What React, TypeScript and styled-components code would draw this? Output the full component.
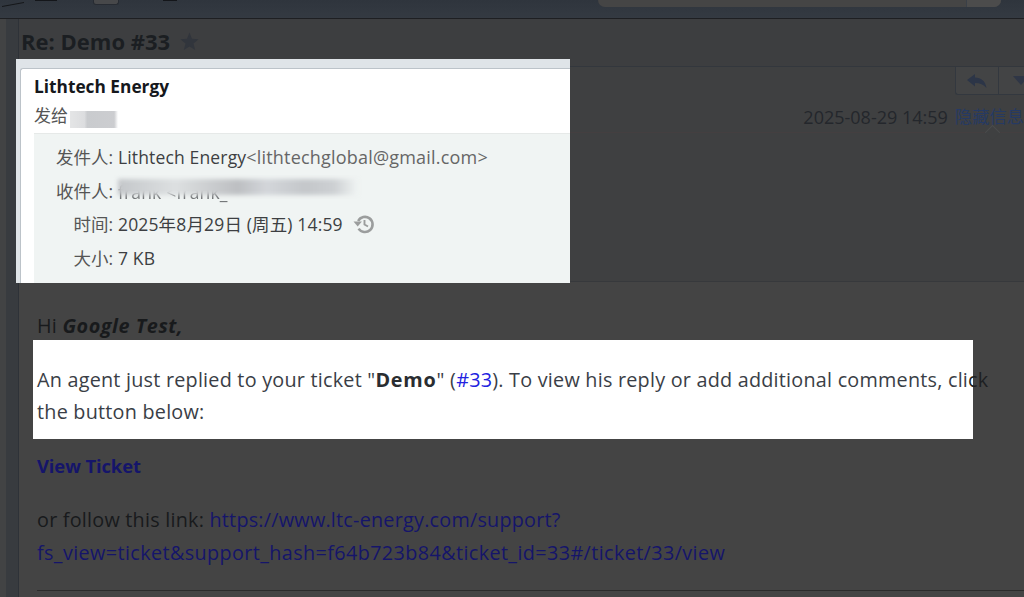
import styled, { createGlobalStyle } from 'styled-components';

const GlobalStyle = createGlobalStyle`
  html, body {
    margin: 0;
    padding: 0;
    background: #444;
  }
  body {
    font-family: 'Open Sans', 'Noto Sans CJK SC', sans-serif;
    overflow: hidden;
  }
`;

const ReplyIcon = () => (
  <svg width="20" height="14" viewBox="0 0 20 14">
    <path d="M0 6 L8 0 V3.5 C14 3.5 18.500 7 19.500 14 C16.500 10.500 13 9 8 9 V12.500 Z" fill="#2c3547" />
  </svg>
);

const HistoryIcon = () => (
  <svg width="22" height="22" viewBox="0 0 22 22" fill="none">
    <path d="M5.2 8 A7.6 7.6 0 1 1 5.6 15.6" stroke="#9b9d9d" strokeWidth="2.6" />
    <path d="M0.500 8.500 H8.900 L4.700 13.500 Z" fill="#9b9d9d" />
    <path d="M11.500 7 V11.500 L15 13.500" stroke="#9b9d9d" strokeWidth="1.9" />
  </svg>
);

const StarIcon = () => (
  <svg width="19" height="19" viewBox="0 0 20 19">
    <path d="M10 0 L12.6 6.500 L19.600 7 L14.200 11.500 L16 18.500 L10 14.700 L4 18.500 L5.800 11.500 L0.400 7 L7.400 6.500 Z" fill="#31353c" />
  </svg>
);

export default function App() {
  return (
    <Page>
      <GlobalStyle />
      <TopBar>
        <Scribble />
        <ToolLabel />
        <ToolButton />
        <ToolText />
        <SearchBox>
          <SearchEnd />
        </SearchBox>
      </TopBar>
      <Workspace>
        <LeftRail />
        <Main>
          <SubjectBar>
            <Subject>Re: Demo #33</Subject>
            <StarIcon />
          </SubjectBar>
          <MailHeader>
            <HeaderTop>
              <SplitButton>
                <SplitLeft>
                  <ReplyIcon />
                </SplitLeft>
                <SplitRight>
                  <Caret />
                </SplitRight>
              </SplitButton>
              <MetaRow>
                <MetaDate>2025-08-29 14:59</MetaDate>
                <MetaLink>隐藏信息</MetaLink>
              </MetaRow>
              <Notch />
            </HeaderTop>
          </MailHeader>
          <MailBody>
            <Line>
              Hi{' '}
              <Greeting>
                <em>Google Test,</em>
              </Greeting>
            </Line>
            <LitBlock>
              <WhitePatch />
              <LitText>
                An agent just replied to your ticket "<strong>Demo</strong>" (<TicketLink>#33</TicketLink>). To
                view his reply or add additional comments, cli<Spill>ck</Spill>
                <br />
                the button below:
              </LitText>
            </LitBlock>
            <Line>
              <ViewTicket>View Ticket</ViewTicket>
            </Line>
            <Line>
              or follow this link: <DimLink>https://www.ltc-energy.com/support?</DimLink>
              <br />
              <LongLink>fs_view=ticket&amp;support_hash=f64b723b84&amp;ticket_id=33#/ticket/33/view</LongLink>
            </Line>
            <Rule />
          </MailBody>
        </Main>
      </Workspace>

      <Spotlight>
        <SenderCard>
          <SenderName>Lithtech Energy</SenderName>
          <SendTo>
            发给<BlurName>frank</BlurName>
          </SendTo>
          <Details>
            <DetailRow>
              <DetailLabel>发件人:</DetailLabel>
              <DetailValue>
                Lithtech Energy<Email>&lt;lithtechglobal@gmail.com&gt;</Email>
              </DetailValue>
            </DetailRow>
            <DetailRow>
              <DetailLabel>收件人:</DetailLabel>
              <DetailValue>
                <BlurAddress>frank &lt;frank_</BlurAddress>
              </DetailValue>
            </DetailRow>
            <DetailRow>
              <DetailLabel>时间:</DetailLabel>
              <DetailValue>
                2025年8月29日 (周五) 14:59
                <HistoryWrap>
                  <HistoryIcon />
                </HistoryWrap>
              </DetailValue>
            </DetailRow>
            <DetailRow>
              <DetailLabel>大小:</DetailLabel>
              <DetailValue>7 KB</DetailValue>
            </DetailRow>
          </Details>
        </SenderCard>
      </Spotlight>
    </Page>
  );
}

const Page = styled.div`
  position: relative;
  width: 1024px;
  height: 597px;
  overflow: hidden;
  display: flex;
  flex-direction: column;
  background: #444;
  color: #1f2124;
`;

const TopBar = styled.div`
  height: 18px;
  flex: none;
  display: flex;
  align-items: flex-start;
  background: linear-gradient(#2f353d, #343a42);
  border-bottom: 1px solid #1e1f22;
`;

const Scribble = styled.div`
  width: 22px;
  height: 4px;
  margin-left: 2px;
  border-bottom: 1px solid #15171a;
  transform: skewY(-10deg);
`;

const ToolLabel = styled.div`
  width: 22px;
  height: 1px;
  margin-left: 11px;
  background: #14161a;
`;

const ToolButton = styled.div`
  width: 24px;
  height: 4px;
  margin-left: 36px;
  background: #47484a;
  border: 1px solid #272b32;
  border-top: none;
  border-radius: 0 0 3px 3px;
`;

const ToolText = styled.div`
  width: 14px;
  height: 1px;
  margin-left: 44px;
  background: #14161a;
`;

const SearchBox = styled.div`
  width: 403px;
  height: 7px;
  margin-left: 421px;
  display: flex;
  justify-content: flex-end;
  background: #454545;
  border-radius: 0 0 14px 14px;
  overflow: hidden;
`;

const SearchEnd = styled.div`
  width: 34px;
  background: #4c4c4c;
  border-left: 1px solid #3a4048;
`;

const Workspace = styled.div`
  flex: 1;
  min-height: 0;
  display: flex;
`;

const LeftRail = styled.div`
  width: 19px;
  flex: none;
  box-sizing: border-box;
  border-left: 6px solid #424344;
  background: #383b3f;
  border-right: 1px solid #2e3238;
`;

const Main = styled.div`
  flex: 1;
  min-width: 0;
  display: flex;
  flex-direction: column;
`;

const SubjectBar = styled.div`
  height: 48px;
  flex: none;
  box-sizing: border-box;
  padding: 0 0 3px 2px;
  display: flex;
  align-items: center;
  gap: 10px;
  background: #3d3e40;
  border-bottom: 1px solid #33373d;
`;

const Subject = styled.h1`
  margin: 0;
  font-size: 22px;
  font-weight: 700;
  color: #1b1e22;
`;

const MailHeader = styled.div`
  height: 215px;
  flex: none;
  box-sizing: border-box;
  background: #3f4041;
  border-bottom: 1px solid #37393c;
`;

const HeaderTop = styled.div`
  position: relative;
  height: 66px;
  box-sizing: border-box;
  display: flex;
  flex-direction: column;
  align-items: flex-end;
  border-bottom: 1px solid #443f40;
`;

const SplitButton = styled.div`
  width: 69px;
  height: 28px;
  display: flex;
  box-sizing: border-box;
  overflow: hidden;
  border: 1px solid #33383f;
  border-top: none;
  border-right: none;
  border-radius: 0 0 0 3px;
  background: #434445;
`;

const SplitLeft = styled.div`
  width: 43px;
  flex: none;
  box-sizing: border-box;
  display: flex;
  align-items: center;
  justify-content: center;
  border-right: 1px solid #33383f;
`;

const SplitRight = styled.div`
  flex: 1;
  min-width: 0;
  display: flex;
  align-items: center;
  padding-left: 14px;
`;

const Caret = styled.div`
  width: 0;
  height: 0;
  flex: none;
  border-left: 8px solid transparent;
  border-right: 8px solid transparent;
  border-top: 9px solid #2f3646;
`;

const MetaRow = styled.div`
  position: relative;
  z-index: 1;
  display: flex;
  align-items: center;
  gap: 7px;
  margin-top: 9px;
  white-space: nowrap;
  font-size: 18px;
  line-height: 26px;
`;

const MetaDate = styled.span`
  color: #24272c;
`;

const MetaLink = styled.span`
  font-size: 17.3px;
  color: #263a63;
`;

const Notch = styled.div`
  position: absolute;
  right: 26px;
  bottom: -6px;
  width: 11px;
  height: 11px;
  box-sizing: border-box;
  background: #3f4041;
  border-top: 1px solid #4a4b4c;
  border-left: 1px solid #4a4b4c;
  transform: rotate(45deg);
`;

const MailBody = styled.div`
  flex: 1;
  min-height: 0;
  padding: 27px 0 0 18px;
  background: #444;
  font-size: 19.8px;
  letter-spacing: 0.23px;
  line-height: 33px;
  color: #181a1c;
`;

const Line = styled.p`
  margin: 0 0 21px;
  white-space: nowrap;
`;

const Greeting = styled.strong`
  letter-spacing: 0.55px;
`;

const LitBlock = styled.div`
  position: relative;
  margin: 0 0 21px;
`;

const WhitePatch = styled.div`
  position: absolute;
  left: -4px;
  top: -23px;
  width: 940px;
  height: 99px;
  background: #fff;
`;

const LitText = styled.p`
  position: relative;
  margin: 0;
  padding-top: 1px;
  line-height: 32px;
  white-space: nowrap;
  color: #3a3e46;

  strong {
    letter-spacing: 0.8px;
    color: #2a2d31;
  }
`;

const Spill = styled.span`
  color: #1d1f22;
`;

const TicketLink = styled.a`
  color: #2222e0;
`;

const ViewTicket = styled.a`
  font-size: 18.4px;
  font-weight: 700;
  letter-spacing: -0.1px;
  color: #15156a;
`;

const DimLink = styled.a`
  color: #15156a;
`;

const LongLink = styled(DimLink)`
  letter-spacing: 0.39px;
`;

const Rule = styled.div`
  height: 1px;
  background: #2b2b2b;
`;

const Spotlight = styled.div`
  position: absolute;
  left: 16px;
  top: 59px;
  width: 554px;
  height: 224px;
  box-sizing: border-box;
  padding: 9px 0 0 4px;
  background: #dfe4e8;
  overflow: hidden;
`;

const SenderCard = styled.div`
  height: 100%;
  box-sizing: border-box;
  padding: 7px 0 0 13px;
  background: #fff;
  border-top: 1px solid #bcc3c9;
  border-left: 1px solid #bcc3c9;
  border-radius: 3px 0 0 0;
`;

const SenderName = styled.div`
  font-size: 17.3px;
  font-weight: 700;
  line-height: 22px;
  color: #15181c;
`;

const SendTo = styled.div`
  margin-top: 6px;
  font-size: 17px;
  line-height: 24px;
  color: #555;
`;

const BlurName = styled.span`
  position: relative;
  display: inline-block;
  width: 48px;
  height: 17px;
  margin-left: 2px;
  vertical-align: -3px;
  font-size: 14px;
  line-height: 17px;
  color: #9a9a9a;
  filter: blur(0.7px);

  &::after {
    content: '';
    position: absolute;
    inset: 0;
    background: linear-gradient(90deg, #e4e5e6, #dcdddf 30%, #c9cbce 36%, #cccdd0 92%, #fff);
  }
`;

const Details = styled.div`
  margin-top: 5px;
  height: 150px;
  box-sizing: border-box;
  padding-top: 6px;
  background: #f0f4f3;
  border-top: 1px solid #e6e9e8;
`;

const DetailRow = styled.div`
  display: flex;
  gap: 5px;
  height: 33.6px;
  align-items: center;
  white-space: nowrap;
  font-size: 17.5px;
`;

const DetailLabel = styled.span`
  width: 79px;
  text-align: right;
  color: #555;
`;

const DetailValue = styled.span`
  display: flex;
  align-items: center;
  letter-spacing: 0.15px;
  color: #3d3f42;
`;

const Email = styled.span`
  font-size: 18px;
  letter-spacing: 0.2px;
  color: #666;
`;

const BlurAddress = styled.span`
  position: relative;
  display: block;
  width: 240px;
  padding-top: 3px;
  line-height: 20px;
  color: #6f7274;
  filter: blur(0.6px);

  &::after {
    content: '';
    position: absolute;
    inset: 0 0 7px;
    background: linear-gradient(
      90deg,
      #c4c7ca,
      #dde0e1 24%,
      #bdbfc2 50%,
      #d3d6da 62%,
      #c4c7ca 78%,
      #cdd0d3 90%,
      #f0f4f3
    );
    filter: blur(2px);
  }
`;

const HistoryWrap = styled.span`
  display: flex;
  margin-left: 10px;
`;
